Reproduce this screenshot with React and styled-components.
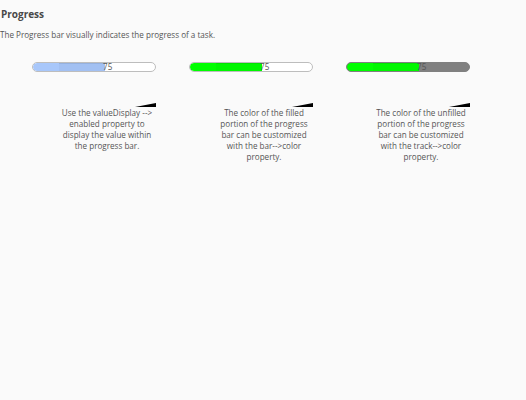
import React from "react";
import styled, { createGlobalStyle } from "styled-components";

const Global = createGlobalStyle`
  html, body { margin: 0; padding: 0; background: #fafafa; }
  body { font-family: "Open Sans", "Noto Sans", sans-serif; }
`;

const Page = styled.div`
  padding: 7px 0 0 0;
  min-height: 400px;
  box-sizing: border-box;
`;

const Title = styled.h1`
  margin: 0 0 0 1px;
  font-size: 10px;
  font-weight: 700;
  color: #484848;
  line-height: 15px;
`;

const Lead = styled.p`
  margin: 7px 0 0 0;
  font-size: 8.1px;
  color: #555;
  line-height: 12px;
`;

const Row = styled.div`
  display: flex;
  gap: 7px;
  padding-left: 32px;
  margin-top: 21px;
`;

const Column = styled.div`
  width: 150px;
  display: flex;
  flex-direction: column;
`;

const BarWrap = styled.div`
  position: relative;
  height: 10px;
`;

const Track = styled.div`
  position: relative;
  width: 124px;
  height: 10px;
  box-sizing: border-box;
  border: 1px solid ${(p) => p.$border};
  border-radius: 5px;
  background: ${(p) => p.$track};
  overflow: hidden;
`;

const Fill = styled.div`
  position: absolute;
  left: 0;
  top: 0;
  bottom: 0;
  background: ${(p) => p.$color};
  border-radius: 5px 0 0 5px;
`;

const Shade = styled.div`
  position: absolute;
  left: 26px;
  top: 0;
  bottom: 0;
  width: ${(p) => p.$w}px;
  box-shadow: inset 0 1px 0 rgba(0, 0, 0, 0.08);
  background: rgba(0, 0, 0, 0.03);
`;

const Value = styled.span`
  position: absolute;
  left: 71px;
  top: -1px;
  font-size: 8.1px;
  line-height: 12px;
  color: #555;
`;

const Wedge = styled.div`
  margin: 31px 0 0 103px;
  width: 0;
  height: 0;
  border-left: 21px solid transparent;
  border-bottom: 4px solid #000;
`;

const Desc = styled.p`
  margin: 0 0 0 25px;
  width: 100px;
  text-align: center;
  font-size: 8.1px;
  line-height: 11px;
  color: #555;
`;

const items = [
  {
    fill: "#a8c7fa",
    track: "#ffffff",
    border: "#bdbdbd",
    text: "Use the valueDisplay --> enabled property to display the value within the progress bar.",
  },
  {
    fill: "#00ff00",
    track: "#ffffff",
    border: "#bdbdbd",
    text: "The color of the filled portion of the progress bar can be customized with the bar-->color property.",
  },
  {
    fill: "#00ff00",
    track: "#808080",
    border: "#808080",
    text: "The color of the unfilled portion of the progress bar can be customized with the track-->color property.",
  },
];

export default function App() {
  const fillW = 72;
  return (
    <Page>
      <Global />
      <Title>Progress</Title>
      <Lead>The Progress bar visually indicates the progress of a task.</Lead>
      <Row>
        {items.map((it, i) => (
          <Column key={i}>
            <BarWrap>
              <Track $track={it.track} $border={it.border}>
                <Fill $color={it.fill} style={{ width: fillW }} />
                <Shade $w={fillW - 26} />
              </Track>
              <Value>75</Value>
            </BarWrap>
            <Wedge />
            <Desc>{it.text}</Desc>
          </Column>
        ))}
      </Row>
    </Page>
  );
}
